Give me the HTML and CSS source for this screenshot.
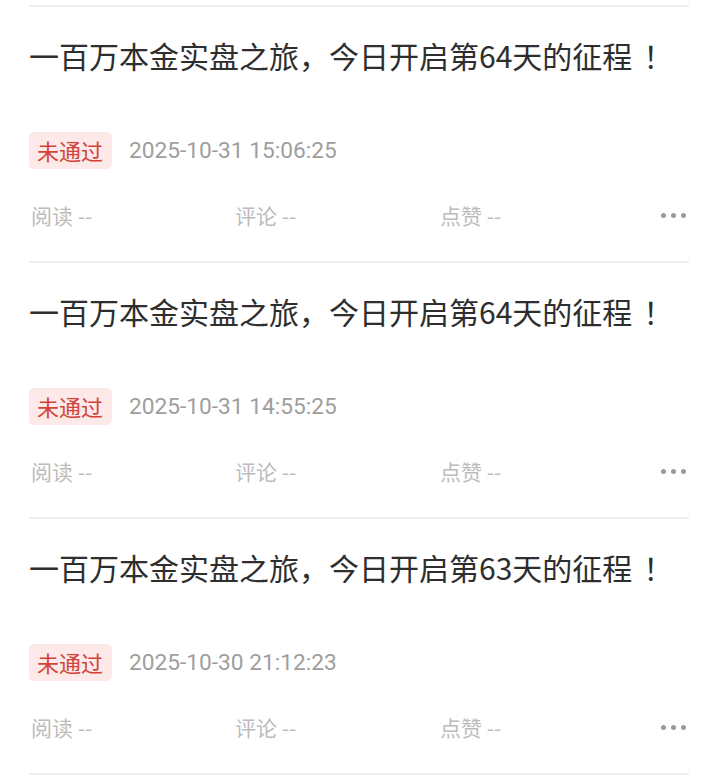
FILE: index.html
```html
<!DOCTYPE html>
<html lang="zh">
<head>
<meta charset="utf-8">
<link rel="stylesheet" href="styles.css">
</head>
<body>
<div class="list">
  <div class="item">
    <div class="title">一百万本金实盘之旅，今日开启第64天的征程<span class="bang">！</span></div>
    <div class="meta"><span class="badge">未通过</span><span class="date">2025-10-31 15:06:25</span></div>
    <div class="stats"><span class="stat">阅读 --</span><span class="stat">评论 --</span><span class="stat">点赞 --</span><span class="more"><i></i><i></i><i></i></span></div>
  </div>
  <div class="item">
    <div class="title">一百万本金实盘之旅，今日开启第64天的征程<span class="bang">！</span></div>
    <div class="meta"><span class="badge">未通过</span><span class="date">2025-10-31 14:55:25</span></div>
    <div class="stats"><span class="stat">阅读 --</span><span class="stat">评论 --</span><span class="stat">点赞 --</span><span class="more"><i></i><i></i><i></i></span></div>
  </div>
  <div class="item">
    <div class="title">一百万本金实盘之旅，今日开启第63天的征程<span class="bang">！</span></div>
    <div class="meta"><span class="badge">未通过</span><span class="date">2025-10-30 21:12:23</span></div>
    <div class="stats"><span class="stat">阅读 --</span><span class="stat">评论 --</span><span class="stat">点赞 --</span><span class="more"><i></i><i></i><i></i></span></div>
  </div>
</div>
</body>
</html>
```
FILE: styles.css
```css
html, body { margin: 0; padding: 0; background: #fff; }
body {
  font-family: "Noto Sans CJK SC", "Roboto", sans-serif;
  width: 711px;
  overflow: hidden;
}
.list {
  margin: 5px 22px 0 29px;
  border-top: 2px solid #efefef;
}
.item {
  border-bottom: 2px solid #efefef;
  height: 256px;
  box-sizing: border-box;
  padding-top: 28px;
}
.title {
  font-size: 30px;
  line-height: 40px;
  height: 40px;
  color: #2e2e2e;
  white-space: nowrap;
}
.bang {
  display: inline-block;
  width: 30px;
  padding-left: 11px;
  box-sizing: border-box;
}
.meta {
  display: flex;
  align-items: center;
  margin-top: 57px;
  height: 37px;
}
.badge {
  background: #fde9e7;
  color: #d2433b;
  font-size: 22px;
  line-height: 37px;
  height: 37px;
  padding: 0 9px 0 8px;
  border-radius: 5px;
}
.date {
  margin-left: 17px;
  font-family: "Roboto", "Noto Sans CJK SC", sans-serif;
  color: #9e9e9e;
  font-size: 22.7px;
}
.stats {
  display: flex;
  align-items: center;
  margin-top: 31px;
  height: 30px;
}
.stat {
  width: 204px;
  font-size: 21px;
  color: #bcbcbc;
  padding-left: 2px;
  box-sizing: border-box;
}
.stat:nth-child(2) { width: 205px; }
.stat:nth-child(3) { width: 220px; }
.more {
  margin-left: auto;
  display: flex;
  gap: 5px;
  padding-right: 3px;
}
.more i {
  display: block;
  width: 5px;
  height: 5px;
  border-radius: 50%;
  background: #9a9a9a;
}
```
